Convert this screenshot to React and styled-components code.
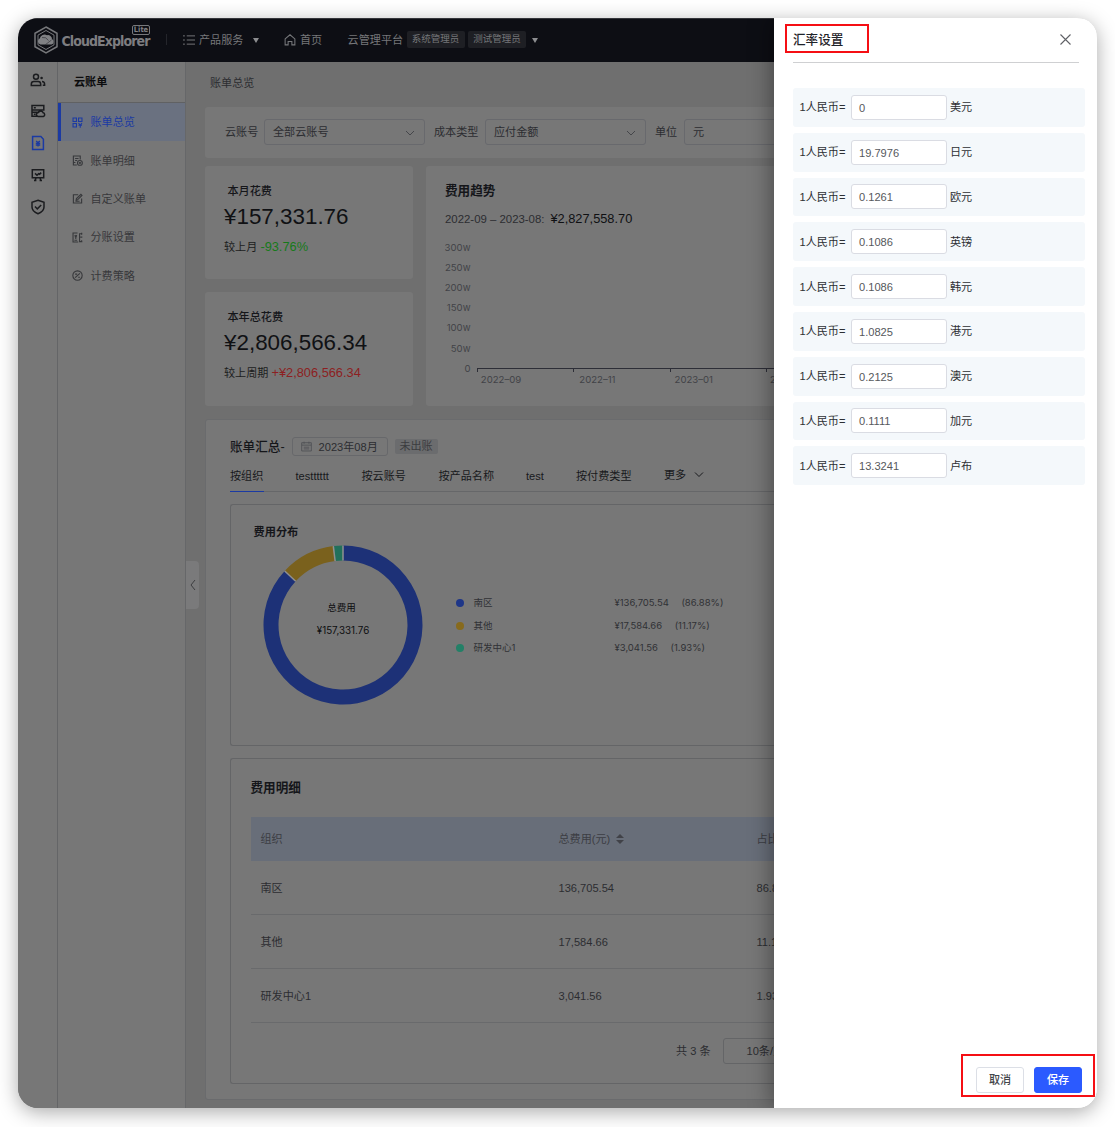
import React from "react";
import styled, { createGlobalStyle } from "styled-components";

const c = {
  panel: "#777777",
  page: "#6f6f6f",
  line: "#696a6c",
  ink: "#15161a",
  text: "#2c2d31",
  blue: "#1b3aa3",
  active: "#6a7180",
};

const Global = createGlobalStyle`
  * { box-sizing: border-box; }
  body {
    margin: 0;
    background: #fff;
    overflow: hidden;
    font: 11.1px/16px "Liberation Sans", "Noto Sans CJK SC", sans-serif;
    color: ${c.text};
    white-space: nowrap;
  }
  svg { display: block; flex: none; }
`;

const Stage = styled.div`
  height: 1127px;
  padding: 18px;
`;
const Window = styled.div`
  position: relative;
  width: 1079px;
  height: 1090px;
  border-radius: 20px;
  overflow: hidden;
  display: flex;
  flex-direction: column;
  background: #fff;
`;
const Shadow = styled.div`
  width: 1079px;
  border-radius: 20px;
  box-shadow: 0 4px 20px rgba(0, 0, 0, 0.34);
`;

/* top bar */
const TopBar = styled.header`
  width: 757px;
  height: 44px;
  flex: none;
  display: flex;
  align-items: center;
  background: #0d0e14;
  border-top: 1px solid #35363b;
  color: #76777a;
  padding: 0 0 2px 16px;
`;
const Brand = styled.div`
  display: flex;
  align-items: center;
  width: 132px;
  position: relative;
`;
const BrandName = styled.span`
  font: bold 14px/20px "DejaVu Sans Condensed", "DejaVu Sans", sans-serif;
  font-stretch: condensed;
  color: #7d7d80;
  margin: 2px 0 0 3.5px;
  letter-spacing: -0.92px;
`;
const Lite = styled.span`
  position: absolute;
  left: 98px;
  top: -1px;
  width: 18px;
  height: 10px;
  border: 1px solid #77787b;
  border-radius: 2px;
  font: bold 7.5px/8.5px "DejaVu Sans Condensed", sans-serif;
  text-align: center;
  color: #808184;
`;
const Divider = styled.i`
  width: 1px;
  height: 11px;
  background: #24252b;
  margin-right: 16px;
`;
const NavItem = styled.div`
  display: flex;
  align-items: center;
  gap: ${(p) => p.$gap || 4}px;
  margin-right: ${(p) => p.$after || 0}px;
`;
const Caret = styled.i`
  border: 3.5px solid transparent;
  border-top: 5px solid #8c8d90;
  border-bottom: 0;
  margin: 2px 0 0 ${(p) => p.$left}px;
`;
const Role = styled.span`
  width: 58px;
  height: 17px;
  margin-left: 3px;
  border-radius: 2px;
  background: #1e1f24;
  font-size: 9.5px;
  line-height: 15.5px;
  text-align: center;
`;

/* side navigation */
const Body = styled.div`
  width: 757px;
  flex: 1;
  display: flex;
  min-height: 0;
  overflow: hidden;
  background: ${c.page};
`;
const Rail = styled.nav`
  width: 40px;
  flex: none;
  border-right: 1px solid #646567;
  background: ${c.panel};
  display: flex;
  flex-direction: column;
  align-items: center;
  padding-top: 9.5px;
  gap: 15.8px;
  color: #1b1c1f;
`;
const Side = styled.nav`
  width: 128px;
  flex: none;
  border-right: 1px solid #666769;
  background: ${c.panel};
`;
const SideTitle = styled.div`
  height: 41px;
  border-bottom: 1px solid #606163;
  padding: 12px 0 0 16px;
  font-weight: bold;
  color: #0c0c0e;
`;
const SideItem = styled.div`
  height: 38.35px;
  display: flex;
  align-items: center;
  gap: 8px;
  padding-left: 10.5px;
  border-left: 3px solid ${(p) => (p.$on ? c.blue : "transparent")};
  background: ${(p) => (p.$on ? c.active : "none")};
  color: ${(p) => (p.$on ? c.blue : "#37383b")};
`;

/* content */
const Main = styled.main`
  position: relative;
  flex: none;
  width: 900px;
  padding-left: 19px;
`;
const Crumb = styled.div`
  height: 45px;
  padding: 13px 0 0 5px;
`;
const Card = styled.section`
  background: ${c.panel};
  border-radius: 3px;
`;
const Filters = styled(Card)`
  height: 51px;
  display: flex;
  align-items: center;
  padding: 0 0 1px 20px;
  margin-bottom: 8px;
`;
const FilterLabel = styled.span`
  width: ${(p) => p.$w}px;
  margin-top: -1px;
`;
const Select = styled.div`
  width: 161px;
  height: 26px;
  margin-right: 9px;
  padding: 0 9px 0 8px;
  border: 1px solid #68696d;
  border-radius: 3px;
  display: flex;
  align-items: center;
  justify-content: space-between;
  svg { color: #45464a; margin-top: 2px; }
`;
const Overview = styled.div`
  display: flex;
  gap: 13px;
  height: 240px;
  margin-bottom: 13px;
`;
const Stats = styled.div`
  width: 208px;
  display: flex;
  flex-direction: column;
  gap: 13px;
`;
const Stat = styled(Card)`
  height: ${(p) => p.$h}px;
  padding: 17px 0 0 19px;
`;
const StatTitle = styled.div`
  padding-left: 3.5px;
  font-weight: 500;
  color: ${c.ink};
`;
const Amount = styled.div`
  font-size: 22.4px;
  line-height: 26px;
  margin-top: 4.5px;
  color: #101114;
`;
const Compare = styled.div`
  margin-top: 9.5px;
  color: #1c1d20;
`;
const Delta = styled.span`
  font-size: 12.8px;
  color: ${(p) => (p.$up ? "#8d1f22" : "#167a1a")};
`;
const Trend = styled(Card)`
  flex: 1;
  padding: 17px 0 0 19px;
`;
const Heading = styled.div`
  font-size: ${(p) => p.$size || 12.6}px;
  font-weight: ${(p) => p.$weight || "bold"};
  color: ${c.ink};
`;
const Period = styled.div`
  margin: 12px 0 8px;
  display: flex;
  align-items: baseline;
  font-size: 11.4px;
  b {
    font-weight: normal;
    font-size: 12.8px;
    color: #0f1013;
    margin-left: 6px;
  }
`;

const Summary = styled(Card)`
  height: 681px;
  border: 1px solid #6a6b6d;
  padding: 17px 0 0 24px;
`;
const SummaryHead = styled.div`
  display: flex;
  align-items: center;
  height: 19px;
`;
const DateBox = styled.div`
  width: 96px;
  height: 19px;
  margin: 0 7px 0 7px;
  border: 1px solid #67686b;
  border-radius: 3px;
  display: flex;
  align-items: center;
  gap: 7px;
  padding-left: 8px;
  svg { color: #505155; }
`;
const State = styled.span`
  width: 43px;
  height: 15px;
  line-height: 15px;
  text-align: center;
  background: #6b6c6e;
  border-radius: 2px;
  color: #3c3d40;
`;
const Tabs = styled.div`
  height: 36px;
  display: flex;
  border-bottom: 1px solid #666769;
  padding-top: 12px;
  color: #18191c;
`;
const Tab = styled.span`
  height: 24px;
  width: ${(p) => p.$w}px;
  margin-right: ${(p) => p.$gap}px;
  margin-top: ${(p) => p.$up || 0}px;
  border-bottom: ${(p) => (p.$on ? `1.5px solid ${c.blue}` : "none")};
  display: flex;
  gap: 8px;
  svg { margin-top: 2px; }
`;
const Box = styled.div`
  height: ${(p) => p.$h}px;
  margin-top: 12px;
  border: 1px solid #646567;
  border-right: 0;
  border-radius: 3px;
  padding: ${(p) => p.$pad};
`;
const Distribution = styled.div`
  display: flex;
  padding-left: 9.5px;
  margin-top: 5px;
`;
const Legend = styled.div`
  margin: 47px 0 0 32.5px;
  font-family: Inter, "Noto Sans CJK SC", sans-serif;
  font-size: 9.5px;
  color: #303135;
`;
const LegendRow = styled.div`
  height: 22.5px;
  display: flex;
  align-items: center;
  i {
    width: 8px;
    height: 8px;
    border-radius: 50%;
    background: ${(p) => p.$color};
    margin-right: 10px;
  }
  b {
    font-weight: normal;
    width: 141px;
  }
  em {
    font-style: normal;
    margin-left: 12.5px;
  }
`;
const Table = styled.div`
  margin-top: 21px;
  width: 640px;
`;
const Row = styled.div`
  display: grid;
  grid-template-columns: 298px 198px 1fr;
  align-items: center;
  height: ${(p) => (p.$head ? 43.5 : 54)}px;
  padding: 1px 0 0 10px;
  background: ${(p) => (p.$head ? "#686e79" : "none")};
  border-bottom: ${(p) => (p.$head ? "0" : `1px solid ${c.line}`)};
  color: ${(p) => (p.$head ? "#3c3d43" : c.text)};
  span {
    display: flex;
    align-items: center;
    gap: 6px;
  }
`;
const Pager = styled.div`
  display: flex;
  align-items: center;
  padding-left: 425.5px;
  gap: 12.5px;
  margin-top: 15px;
`;
const PageSize = styled.div`
  width: 100px;
  height: 26px;
  line-height: 25px;
  border: 1px solid #646567;
  border-radius: 3px;
  padding-left: 22.5px;
`;
const Fold = styled.div`
  position: absolute;
  left: 0;
  top: 499px;
  width: 13px;
  height: 48px;
  border-radius: 0 4px 4px 0;
  background: #7a7a7b;
  color: #3d3e41;
  display: flex;
  align-items: center;
  justify-content: center;
`;

/* drawer */
const Drawer = styled.aside`
  position: absolute;
  top: 0;
  right: 0;
  width: 323px;
  height: 100%;
  background: #fff;
  box-shadow: -4px 0 20px rgba(0, 0, 0, 0.34);
  color: #36383c;
  display: flex;
  flex-direction: column;
  padding-left: 19px;
`;
const DrawerHead = styled.div`
  width: 286px;
  height: 45px;
  flex: none;
  border-bottom: 1px solid #cfd0d2;
  display: flex;
  justify-content: space-between;
  padding: 13.5px 8px 0 0;
  font-size: 12.6px;
  font-weight: 500;
  color: #1f2329;
  svg { margin-top: 2px; }
`;
const Rates = styled.div`
  flex: 1;
  padding-top: 25px;
`;
const Rate = styled.div`
  width: 292px;
  height: 38.8px;
  margin-bottom: 6px;
  border-radius: 3px;
  background: #f4f8fb;
  display: flex;
  align-items: center;
  padding-left: 6.5px;
  color: #2d2f33;
`;
const RateLabel = styled.span`
  width: 51px;
`;
const Field = styled.div`
  width: 96px;
  height: 25px;
  margin-right: 3.5px;
  padding: 1px 0 0 7.5px;
  line-height: 23px;
  border: 1px solid #dadce3;
  border-radius: 3px;
  background: #fff;
  color: #56585c;
`;
const Actions = styled.div`
  display: flex;
  justify-content: flex-end;
  gap: 10px;
  padding: 0 15px 15.5px 0;
`;
const Button = styled.button`
  width: 48px;
  height: 26px;
  border: 1px solid ${(p) => (p.$primary ? "#2b5aff" : "#dcdfe6")};
  border-radius: 3px;
  background: ${(p) => (p.$primary ? "#2b5aff" : "#fff")};
  color: ${(p) => (p.$primary ? "#fff" : "#45474c")};
  font: 500 11.1px/16px "Liberation Sans", "Noto Sans CJK SC", sans-serif;
  padding: 1px 0 0;
`;
const Mark = styled.div`
  position: absolute;
  left: ${(p) => p.$x}px;
  top: ${(p) => p.$y}px;
  width: ${(p) => p.$w}px;
  height: ${(p) => p.$h}px;
  border: 2px solid #f50f14;
`;

const Svg = ({ w = 16, h = w, vb = 16, sw = 1.3, children }) => (
  <svg width={w} height={h} viewBox={`0 0 ${vb} ${vb}`} fill="none" stroke="currentColor" strokeWidth={sw}>
    {children}
  </svg>
);
const Chevron = ({ d = "M1 3l4 4 4-4", size = 10, w = 1 }) => (
  <Svg w={size} vb={10} sw={w}><path d={d} /></Svg>
);

const railIcons = [
  <><circle cx="6" cy="4.7" r="2.5" /><path d="M1.3 13.4v-1.2q0-2.6 2.6-2.6h4.2q2.600 0 2.600 2.600v1.200z" /><circle cx="11.600" cy="6" r="1.300" fill="currentColor" stroke="none" /><path d="M12 9.400q2.600.2 2.600 2.600v1.200h-1.800" /></>,
  <><path d="M7.500 13.300H2V9.200h5.500M2 2.500h11.800v4.400H2zM3.800 4.700h2M3.800 11.200h1.800M2 6.700V9.400M12 6.900l-5 3" /><path d="M8.400 13.400a2 2 0 0 1 0-4 2.600 2.600 0 0 1 4.800.4 1.900 1.900 0 0 1 .3 3.600z" /></>,
  <><path d="M2.600 1.600h8.300l2.500 2.600v10.200H2.600z" /><path d="M6.200 6L8 7.800 9.800 6M5.800 8.300h4.400M5.800 10h4.400M8 7.800v3.800" strokeWidth="1.300" /></>,
  <><path d="M2.300 2.800h11.400v8H2.300zM6 11l-1 2.800M10 11l1 2.800M4 13.600h2.400M9.600 13.600H12" /><path d="M5 6.400l2 1.800 1.600-1.600 1 .6 1.600-1.600" /></>,
  <><path d="M8 1.300l6 2v4.600c0 3.400-2.600 5.400-6 6.800-3.400-1.400-6-3.400-6-6.800V3.300z" /><path d="M5 7.500l2.300 2.400 3.900-3.900" /></>,
];
const sideItems = [
  ["账单总览", <path key="a" d="M1.500 1.500h5v5h-5zM9.500 1.500h5v5h-5zM1.500 9.500h5v5h-5zM9.500 9l2.500 3 2.500-3M9.500 12h5M12 12v3.500" />],
  ["账单明细", <g key="a"><path d="M7 14.500H2v-13h10v5M4.500 5h5M4.500 8h3M2 11h3" /><circle cx="11.500" cy="11.500" r="3.500" /><path d="M10 11.500h3M11.500 10v3" /></g>],
  ["自定义账单", <path key="a" d="M9 2.500H2v12h12V8M6 10.500l.5-2.500 6.500-6 1.500 1.500L8 10zM5 12h6" />],
  ["分账设置", <path key="a" d="M9 14.500H1.500v-13H8M4 4.500l1.500 2 1.500-2M4 7h3M5.500 7v3M3.500 12h4M15 2.500h-4v11.500h4M12 7.500h3M14 1v3M14 12v3" />],
  ["计费策略", <g key="a"><circle cx="8" cy="8" r="6.8" /><path d="M4.500 11l7-6M4.500 6h3M9 10.500h2.500" /></g>],
];
const tabs = [
  ["按组织", 34, 31.5], ["testttttt", 34, 32], ["按云账号", 45, 32], ["按产品名称", 56, 31.5],
  ["test", 19, 31], ["按付费类型", 56, 32],
];
const legend = [
  ["#1e3688", "南区", "¥136,705.54", "(86.88%)"],
  ["#876a1c", "其他", "¥17,584.66", "(11.17%)"],
  ["#238067", "研发中心1", "¥3,041.56", "(1.93%)"],
];
const rows = [
  ["南区", "136,705.54", "86.88%"],
  ["其他", "17,584.66", "11.17%"],
  ["研发中心1", "3,041.56", "1.93%"],
];
const rates = [
  ["0", "美元"], ["19.7976", "日元"], ["0.1261", "欧元"], ["0.1086", "英镑"], ["0.1086", "韩元"],
  ["1.0825", "港元"], ["0.2125", "澳元"], ["0.1111", "加元"], ["13.3241", "卢布"],
];

function TrendChart() {
  return (
    <svg width="330" height="160" viewBox="0 0 330 160" fontFamily="Inter, sans-serif" fontSize="9.6" fill="#424347">
      {["300w", "250w", "200w", "150w", "100w", "50w", "0"].map((t, i) => (
        <text key={t} x="25.5" y={15.5 + i * 20.2} textAnchor="end">{t}</text>
      ))}
      <path d="M32 133.5H330M32.500 133v4M128.500 133v4M225.500 133v4M321.500 133v4" stroke="#2d2e37" />
      {["2022–09", "2022–11", "2023–01", "2023–03"].map((t, i) => (
        <text key={t} x={56 + i * 96.4} y="148" textAnchor="middle">{t}</text>
      ))}
    </svg>
  );
}

const point = (deg, r) => {
  const a = ((deg - 90) * Math.PI) / 180;
  return `${(80 + r * Math.cos(a)).toFixed(2)} ${(80 + r * Math.sin(a)).toFixed(2)}`;
};
const arc = (from, to) => {
  const big = to - from > 180 ? 1 : 0;
  return `M${point(from, 79.5)}A79.5 79.5 0 ${big} 1 ${point(to, 79.5)}L${point(to, 64.5)}A64.5 64.5 0 ${big} 0 ${point(from, 64.5)}Z`;
};
function Donut() {
  return (
    <svg width="160" height="160" viewBox="0 0 160 160" textAnchor="middle" fill="#0d0e10">
      <path d={arc(0, 312.8)} fill="#1d3177" />
      <path d={arc(312.8, 353)} fill="#7a611d" />
      <path d={arc(353, 359.99)} fill="#22705b" />
      {[0, 312.8, 353].map((a) => (
        <path key={a} d={`M${point(a, 79.5)}L${point(a, 64.5)}`} stroke="#909090" strokeWidth="1.5" />
      ))}
      <text x="78.5" y="65.5" fontSize="9.5" fontFamily="Noto Sans CJK SC, sans-serif">总费用</text>
      <text x="80" y="88.5" fontSize="9.8" fontFamily="Inter, sans-serif">¥157,331.76</text>
    </svg>
  );
}

export default function App() {
  return (
    <Stage>
      <Global />
      <Shadow>
        <Window>
          <TopBar>
            <Brand>
              <svg width="24" height="28" viewBox="0 0 24 28" fill="none" stroke="#77787b">
                <path d="M12 1l11 6.300v13.400L12 27 1 20.700V7.300z" strokeWidth="1.500" />
                <path d="M12 4.500l8 4.600v9.800l-8 4.600-8-4.600V9.100z" strokeWidth="1" />
                <path d="M6.500 18.500a3.200 3.200 0 0 1-.8-6A5 5 0 0 1 13 9.200a4 4 0 0 1 5 3.800 3 3 0 0 1-.5 5.500z" fill="#808184" stroke="none" />
                <path d="M8 11.500q4-1 6.500 3M11 19l6.500-5" stroke="#33343a" strokeWidth=".7" />
              </svg>
              <BrandName>CloudExplorer</BrandName>
              <Lite>Lite</Lite>
            </Brand>
            <Divider />
            <NavItem $after={25}>
              <Svg w={12} sw={1.3}><path d="M0 2.500h2.500M0 8h2.500M0 13.500h2.500M5 2.500h11M5 8h11M5 13.500h11" /></Svg>
              产品服务<Caret $left={5.5} />
            </NavItem>
            <NavItem $after={25.500}>
              <Svg w={12} sw={1.4}><path d="M1.500 6.500L8 1l6.500 5.500v8h-4V10h-5v4.500h-4z" /></Svg>
              首页
            </NavItem>
            <NavItem $gap={0.5}>
              云管理平台<Role>系统管理员</Role><Role>测试管理员</Role><Caret $left={5} />
            </NavItem>
          </TopBar>
          <Body>
            <Rail>
              {railIcons.map((icon, i) => (
                <Svg key={i} sw={1.5}><g color={i === 2 ? c.blue : undefined} stroke="currentColor">{icon}</g></Svg>
              ))}
            </Rail>
            <Side>
              <SideTitle>云账单</SideTitle>
              {sideItems.map(([name, icon], i) => (
                <SideItem key={name} $on={i === 0}><Svg w={11} sw={1.6}>{icon}</Svg>{name}</SideItem>
              ))}
            </Side>
            <Main>
              <Crumb>账单总览</Crumb>
              <Filters>
                <FilterLabel $w={39}>云账号</FilterLabel>
                <Select>全部云账号<Chevron /></Select>
                <FilterLabel $w={51}>成本类型</FilterLabel>
                <Select>应付金额<Chevron /></Select>
                <FilterLabel $w={29}>单位</FilterLabel>
                <Select>元<Chevron /></Select>
              </Filters>
              <Overview>
                <Stats>
                  <Stat $h={113}>
                    <StatTitle>本月花费</StatTitle>
                    <Amount>¥157,331.76</Amount>
                    <Compare>较上月 <Delta>-93.76%</Delta></Compare>
                  </Stat>
                  <Stat $h={114}>
                    <StatTitle>本年总花费</StatTitle>
                    <Amount>¥2,806,566.34</Amount>
                    <Compare>较上周期 <Delta $up>+¥2,806,566.34</Delta></Compare>
                  </Stat>
                </Stats>
                <Trend>
                  <Heading>费用趋势</Heading>
                  <Period>2022-09 – 2023-08: <b>¥2,827,558.70</b></Period>
                  <TrendChart />
                </Trend>
              </Overview>
              <Summary>
                <SummaryHead>
                  <Heading $weight={500}>账单汇总-</Heading>
                  <DateBox>
                    <Svg w={11}><path d="M1 2.500h14v12H1zM1 6h14M4.500 1v3M11.500 1v3M4 9h8M4 11.500h8" /></Svg>
                    2023年08月
                  </DateBox>
                  <State>未出账</State>
                </SummaryHead>
                <Tabs>
                  {tabs.map(([name, w, gap], i) => (
                    <Tab key={name} $w={w} $gap={gap} $on={i === 0}>{name}</Tab>
                  ))}
                  <Tab $w={60} $gap={0} $up={-1}>更多<Chevron d="M1 3.500l4 4 4-4" /></Tab>
                </Tabs>
                <Box $h={242} $pad="19px 0 0 22.5px">
                  <Heading $size={11.2}>费用分布</Heading>
                  <Distribution>
                    <Donut />
                    <Legend>
                      {legend.map(([color, name, value, share]) => (
                        <LegendRow key={name} $color={color}>
                          <i /><b>{name}</b>{value}<em>{share}</em>
                        </LegendRow>
                      ))}
                    </Legend>
                  </Distribution>
                </Box>
                <Box $h={326} $pad="21px 0 0 19.500px">
                  <Heading>费用明细</Heading>
                  <Table>
                    <Row $head>
                      <span>组织</span>
                      <span>
                        总费用(元)
                        <svg width="8" height="10" viewBox="0 0 8 10" fill="#414248"><path d="M0 4l4-4 4 4zM0 6h8l-4 4z" /></svg>
                      </span>
                      <span>占比</span>
                    </Row>
                    {rows.map((r) => (
                      <Row key={r[0]}>{r.map((v) => <span key={v}>{v}</span>)}</Row>
                    ))}
                  </Table>
                  <Pager>共 3 条<PageSize>10条/页</PageSize></Pager>
                </Box>
              </Summary>
              <Fold><Chevron d="M7 0L3 5l4 5" size={10} /></Fold>
            </Main>
          </Body>
          <Drawer>
            <DrawerHead>
              汇率设置
              <Svg w={11} vb={11} sw={1.1}><path d="M.5.5l10 10M10.500.5l-10 10" stroke="#5f6166" /></Svg>
            </DrawerHead>
            <Rates>
              {rates.map(([value, unit]) => (
                <Rate key={unit}><RateLabel>1人民币=</RateLabel><Field>{value}</Field>{unit}</Rate>
              ))}
            </Rates>
            <Actions>
              <Button>取消</Button>
              <Button $primary>保存</Button>
            </Actions>
            <Mark $x={11} $y={6} $w={84} $h={29} />
            <Mark $x={187} $y={1036} $w={134} $h={43} />
          </Drawer>
        </Window>
      </Shadow>
    </Stage>
  );
}
